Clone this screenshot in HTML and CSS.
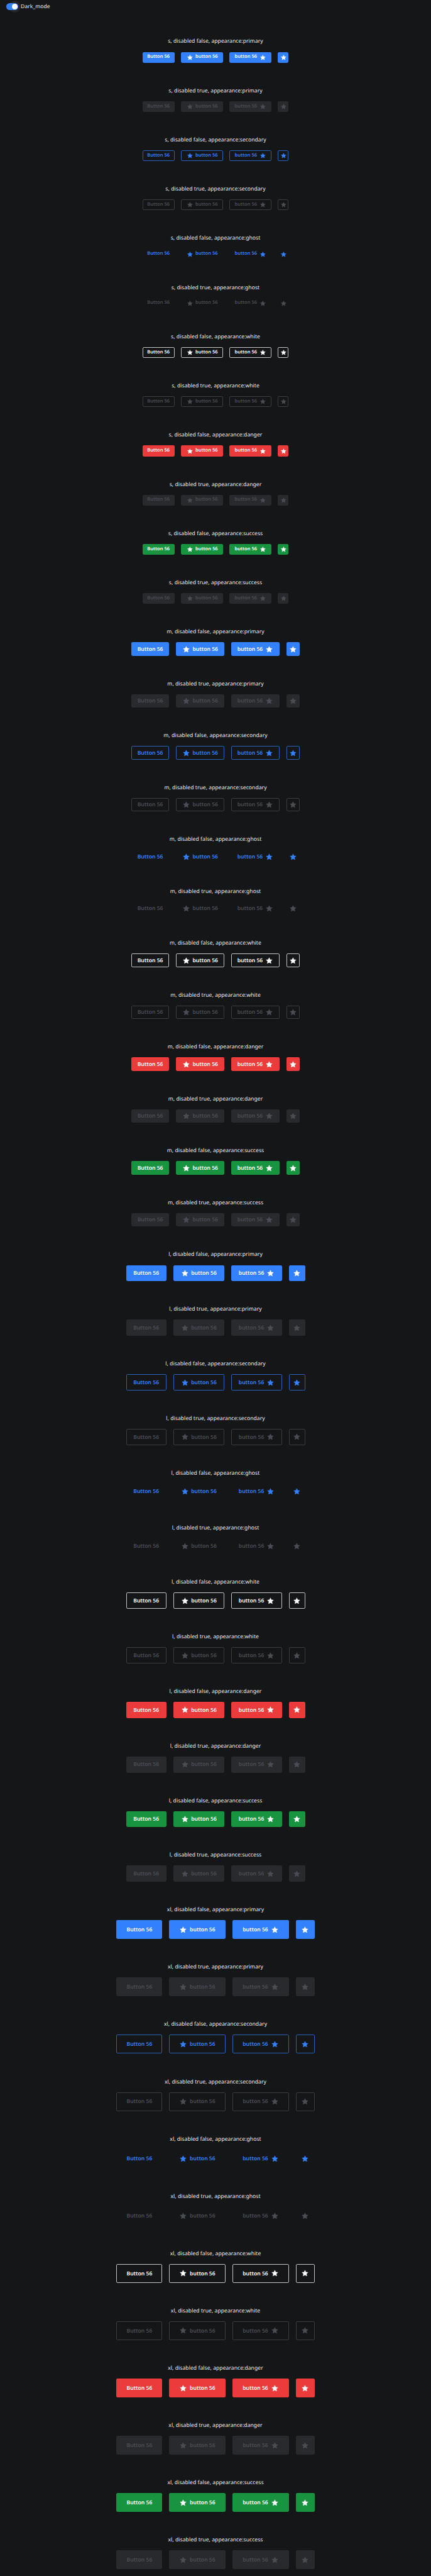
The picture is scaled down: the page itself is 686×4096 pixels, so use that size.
FILE: index.html
```html
<!DOCTYPE html>
<html lang="en">
<head>
<meta charset="utf-8">
<title>Buttons</title>
<link rel="stylesheet" href="styles.css">
</head>
<body>
<svg class="sprite" aria-hidden="true">
  <symbol id="star" viewBox="0 0 24 24">
    <path d="M12 3.1 L14.8 8.9 L21.1 9.8 L16.6 14.1 L17.7 20.5 L12 17.6 L6.3 20.5 L7.4 14.1 L2.9 9.8 L9.2 8.9 Z" fill="currentColor" stroke="currentColor" stroke-width=".7" stroke-linejoin="round"/>
  </symbol>
</svg>
<header class="toolbar">
  <span class="switch"><span class="switch-track"></span><span class="switch-thumb"></span></span>
  <span class="toolbar-label">Dark_mode</span>
</header>
<main id="gallery" class="gallery"></main>
<script src="script.js"></script>
</body>
</html>
```
FILE: styles.css
```css
:root {
  --u: 0.53586px;
  --bg: #151618;
}
* { box-sizing: border-box; }
body {
  margin: 0;
  background: var(--bg);
  color: #ededee;
  font-family: "Noto Sans", sans-serif;
  font-size: calc(16 * var(--u));
  letter-spacing: calc(0.1 * var(--u));
  text-rendering: geometricPrecision;
  overflow: hidden;
}
.sprite { display: none; }
.toolbar {
  display: flex;
  align-items: center;
  height: calc(60 * var(--u));
  padding: 0 0 calc(20 * var(--u)) calc(18 * var(--u));
}
.switch {
  position: relative;
  width: calc(43.5 * var(--u));
  height: calc(20 * var(--u));
}
.switch::before {
  content: "";
  position: absolute;
  left: calc(8 * var(--u));
  top: calc(-8 * var(--u));
  width: calc(36 * var(--u));
  height: calc(36 * var(--u));
  border-radius: 50%;
  background: #242527;
}
.switch-track {
  position: absolute;
  inset: 0 auto 0 0;
  width: calc(36 * var(--u));
  border-radius: calc(10 * var(--u));
  background: #3381ff;
}
.switch-thumb {
  position: absolute;
  left: calc(18 * var(--u));
  top: calc(2 * var(--u));
  width: calc(16 * var(--u));
  height: calc(16 * var(--u));
  border-radius: 50%;
  background: #fff;
}
.toolbar-label { position: relative; line-height: 1; }

/* space-between absorbs subpixel rounding over the long list */
.gallery {
  display: flex;
  flex-direction: column;
  justify-content: space-between;
  height: calc(7564 * var(--u));
  padding-top: calc(51 * var(--u));
}
.caption {
  height: calc(24 * var(--u));
  margin: 0 0 calc(19 * var(--u));
  line-height: calc(24 * var(--u));
  text-align: center;
  white-space: nowrap;
}
.variant + .variant { padding-top: calc(70.9 * var(--u)); }
.row {
  display: flex;
  justify-content: center;
  gap: calc(20 * var(--u));
}
.btn {
  flex: none;
  display: flex;
  align-items: center;
  justify-content: center;
  width: calc(var(--w) * var(--u));
  height: calc(var(--h) * var(--u));
  padding: 0;
  border: 1px solid transparent;
  border-radius: calc(4 * var(--u));
  background: none;
  color: inherit;
  font: 570 calc(var(--fs) * var(--u)) / 1 "Noto Sans", sans-serif;
  text-rendering: geometricPrecision;
  white-space: nowrap;
}
.btn.icon-left, .btn.icon-right { width: calc(var(--wi) * var(--u)); gap: calc(7 * var(--u)); }
.btn.icon-only { width: calc(var(--h) * var(--u)); }
.star {
  flex: none;
  width: calc(var(--icon) * var(--u));
  height: calc(var(--icon) * var(--u));
}
.size-s { --h: 32; --w: 95.6; --wi: 123.6; --fs: 14; --icon: 20; }
.size-m { --h: 40; --w: 112; --wi: 144; --fs: 16; --icon: 24; }
.size-l { --h: 48; --w: 120; --wi: 152; --fs: 16; --icon: 24; }
.size-xl { --h: 56; --w: 136; --wi: 168; --fs: 16; --icon: 24; }

.primary .btn { background: #3381ff; color: #fff; }
.danger .btn { background: #eb3b3b; color: #fff; }
.success .btn { background: #18933f; color: #fff; }
.secondary .btn { border-color: #2a61bb; color: #3381ff; }
.ghost .btn { color: #3381ff; }
.white .btn { border-color: #c4c4c5; color: #fff; }
.disabled .btn { background: #292a2e; color: #4b4d55; }
.disabled.secondary .btn, .disabled.white .btn { background: none; border-color: #3c3d43; }
.disabled.ghost .btn { background: none; }
.primary .btn, .danger .btn, .success .btn { border: 0; }
```
FILE: script.js
```js
const sizes = ["s", "m", "l", "xl"];
const appearances = ["primary", "secondary", "ghost", "white", "danger", "success"];
const star = '<svg class="star"><use href="#star"/></svg>';

const variant = (size, appearance, disabled) => `
  <section class="variant size-${size} ${appearance}${disabled ? " disabled" : ""}">
    <p class="caption">${size}, disabled ${disabled}, appearance:${appearance}</p>
    <div class="row">
      <button class="btn"><span>Button 56</span></button>
      <button class="btn icon-left">${star}<span>button 56</span></button>
      <button class="btn icon-right"><span>button 56</span>${star}</button>
      <button class="btn icon-only">${star}</button>
    </div>
  </section>`;

document.getElementById("gallery").innerHTML = sizes
  .flatMap(s => appearances.flatMap(a => [false, true].map(d => variant(s, a, d))))
  .join("");
```
